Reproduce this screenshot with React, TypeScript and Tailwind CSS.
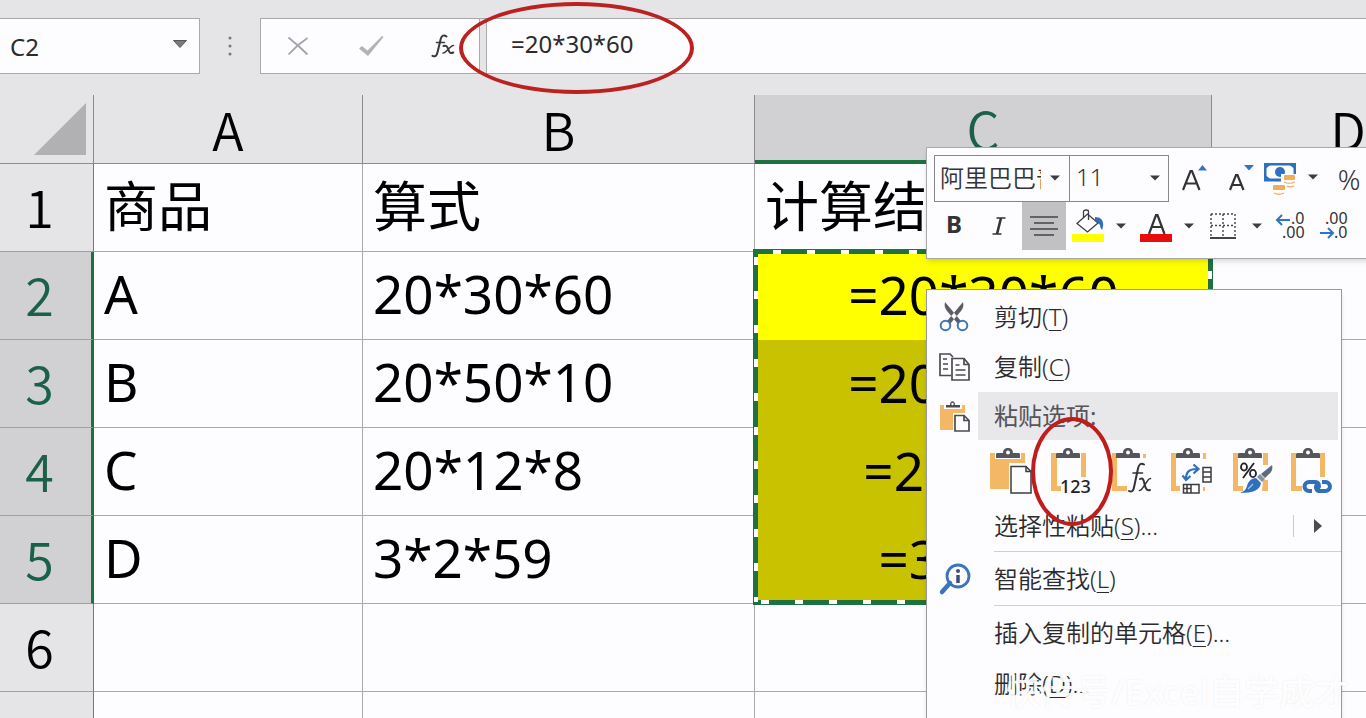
import type { ReactNode } from "react";

const UI = "font-['Noto_Sans','Noto_Sans_CJK_SC',sans-serif]";

type Row = { n: number; a?: string; b?: string; c?: string; selected?: boolean };

const rows: Row[] = [
  { n: 1, a: "商品", b: "算式", c: "计算结果" },
  { n: 2, a: "A", b: "20*30*60", c: "=20*30*60", selected: true },
  { n: 3, a: "B", b: "20*50*10", c: "=20*50*10", selected: true },
  { n: 4, a: "C", b: "20*12*8", c: "=20*12*8", selected: true },
  { n: 5, a: "D", b: "3*2*59", c: "=3*2*59", selected: true },
  { n: 6 },
];

function Caret({ className = "" }: { className?: string }) {
  return (
    <svg viewBox="0 0 12 7" className={`h-[6px] w-[10px] ${className}`} aria-hidden="true">
      <path d="M0 0.5h12L6 6.5z" fill="#3c3c40" />
    </svg>
  );
}

/* ---------- formula bar ---------- */

function FormulaBar() {
  return (
    <header className="flex h-[95px] items-start pt-[18px]">
      <div className="flex h-14 w-[200px] shrink-0 items-center border border-l-0 border-[#a9a8ab] bg-[#fdfcfe]">
        <input
          aria-label="名称框"
          defaultValue="C2"
          className="h-full w-[160px] bg-transparent pl-[10px] text-2xl text-[#2b2b2d] outline-none"
        />
        <button aria-label="展开名称" className="flex h-full flex-1 items-center justify-center pb-1">
          <svg viewBox="0 0 14 8" className="h-2 w-[14px]">
            <path d="M0.5 0.5h13L7 7.5z" fill="#77777f" stroke="#55555c" />
          </svg>
        </button>
      </div>
      <div className="flex h-14 w-[60px] shrink-0 items-center justify-center">
        <svg viewBox="0 0 4 22" className="h-[22px] w-1" fill="#77767b">
          <circle cx="2" cy="3" r="1.5" />
          <circle cx="2" cy="11" r="1.5" />
          <circle cx="2" cy="19" r="1.5" />
        </svg>
      </div>
      <div className="flex h-14 min-w-0 flex-1 items-stretch border border-r-0 border-[#a9a8ab] bg-[#fdfcfe]">
        <button aria-label="取消" className="flex w-[74px] items-center justify-center">
          <svg viewBox="0 0 22 20" className="h-5 w-[22px]" fill="none" stroke="#a3a3ab" strokeWidth="1.8">
            <path d="M1.5 1.5C7 6 14 12 20.500 18.500M20.500 2C13 7 7 12.500 1.500 18.500" />
          </svg>
        </button>
        <button aria-label="输入" className="flex w-[72px] items-center justify-center">
          <svg viewBox="0 0 26 22" className="h-[22px] w-[26px]" fill="#b3b2b8">
            <path d="M1 13.500L4 11l5.500 4.500L24 1l1.500 1L10 21z" />
          </svg>
        </button>
        <button aria-label="插入函数" className="flex w-[72px] items-center justify-center">
          <svg viewBox="0 0 24 24" className="h-6 w-6" fill="none" stroke="#3a3a3e" strokeLinecap="round">
            <path d="M15.500 2.500C13 .5 10.500 1.500 9.700 5L6.600 18c-.8 4-2.600 5-5.100 3.800" strokeWidth="2" />
            <path d="M5.500 8.500h8" strokeWidth="1.500" />
            <path d="M12.500 12c3-1 3.800.5 4.800 3.500s2 4.500 5 3" strokeWidth="2" />
            <path d="M22.500 11.500c-3-.5-7.500 8-10.500 7.500" strokeWidth="1.500" />
          </svg>
        </button>
        <div className="w-2 border-x border-[#a9a8ab] bg-[#e5e4e6]" />
        <input
          aria-label="编辑栏"
          defaultValue="=20*30*60"
          className="min-w-0 flex-1 bg-transparent pl-6 pb-1 text-2xl text-[#2b2b2d] outline-none"
        />
      </div>
    </header>
  );
}

/* ---------- grid ---------- */

function CopyMarquee() {
  return (
    <svg
      className="pointer-events-none absolute -left-[2px] -top-[3px] z-10 h-[356px] w-[460px]"
      viewBox="0 0 460 356"
      fill="none"
      aria-hidden="true"
    >
      <rect x="2.500" y="2.500" width="455" height="351" stroke="#1d7240" strokeWidth="5" />
      <path d="M20 3H457" stroke="#fff" strokeWidth="4" strokeDasharray="8 26" />
      <path d="M3 8V353" stroke="#fff" strokeWidth="4" strokeDasharray="8 26" />
      <path d="M8 353H457" stroke="#fff" strokeWidth="4" strokeDasharray="8 26" />
      <path d="M457 22V353" stroke="#fff" strokeWidth="4" strokeDasharray="8 26" />
    </svg>
  );
}

function Sheet() {
  const label = "p-0 font-['Noto_Sans_CJK_SC',sans-serif] text-[52px] leading-none font-[350]";
  const head = `${label} border-r border-b border-[#8c8b8e]`;
  const line = "border-r border-b border-[#a9a8ab] p-0 leading-none";
  return (
    <table className="w-[1485px] table-fixed border-separate border-spacing-0">
      <colgroup>
        <col className="w-[94px]" />
        <col className="w-[269px]" />
        <col className="w-[392px]" />
        <col className="w-[457px]" />
        <col />
      </colgroup>
      <thead>
        <tr className="h-[69px] bg-[#e5e4e6] text-black">
          <th className="border-r border-b border-[#8c8b8e] p-0 pr-[7px] align-middle">
            <svg viewBox="0 0 52 52" className="ml-auto h-[52px] w-[52px]" aria-label="全选">
              <path d="M52 0V52H0z" fill="#b1b0b2" />
            </svg>
          </th>
          <th className={head}>A</th>
          <th className={head}>B</th>
          <th className={`${label} border-r border-b-4 border-r-[#8c8b8e] border-b-[#1d7240] bg-[#d1d0d2] text-[#1b6048]`}>
            C
          </th>
          <th className={head}>D</th>
        </tr>
      </thead>
      <tbody>
        {rows.map((r) => {
          const cell = `${line} pl-[10px] pb-1 ${r.n === 1 ? "text-[54px]" : "text-[53px]"}`;
          return (
            <tr key={r.n} className="h-[88px]">
              <th
                className={
                  r.selected
                    ? `${label} border-r-[3px] border-b border-r-[#1d7240] border-b-[#a09fa2] bg-[#d1d0d2] pr-3 pb-1 text-[#1b6048]`
                    : `${label} border-r border-b border-r-[#77767a] border-b-[#a09fa2] bg-[#e5e4e6] pr-[14px] pb-1 text-black`
                }
              >
                {r.n}
              </th>
              <td className={cell}>{r.a}</td>
              <td className={cell}>{r.b}</td>
              <td
                className={
                  r.selected
                    ? `relative p-0 pb-1 text-center text-[53px] leading-none ${r.n === 2 ? "bg-[#ffff00]" : "bg-[#c8c200]"}`
                    : cell
                }
              >
                {r.c}
                {r.n === 2 && <CopyMarquee />}
              </td>
              <td className={line} />
            </tr>
          );
        })}
        <tr className="h-[88px]">
          <th className="border-r border-[#77767a] bg-[#e5e4e6]" />
          <td className="border-r border-[#a9a8ab]" />
          <td className="border-r border-[#a9a8ab]" />
          <td className="border-r border-[#a9a8ab]" />
          <td />
        </tr>
      </tbody>
    </table>
  );
}

/* ---------- mini toolbar ---------- */

function DropButton({ label, className }: { label: string; className: string }) {
  return (
    <button aria-label={label} className={`flex h-full items-center justify-center ${className}`}>
      <Caret />
    </button>
  );
}

function MiniToolbar() {
  return (
    <div className="absolute left-[926px] top-[147px] z-20 w-[460px] border border-[#a9a8ab] bg-[#fdfcfe] pt-[7px] pb-2 text-[#333336] shadow-md">
      <div className="flex h-[47px] items-stretch pl-[7px]">
        <div className="relative w-[136px] border border-[#88878b]">
          <select
            aria-label="字体"
            className="h-full w-full appearance-none truncate bg-transparent pl-[5px] pr-7 pb-1 font-['Noto_Sans_CJK_SC',sans-serif] text-2xl font-[350] [text-overflow:clip]"
          >
            <option>阿里巴巴普惠体</option>
          </select>
          <Caret className="pointer-events-none absolute right-[9px] top-[19px]" />
        </div>
        <div className="relative w-[99px] border border-l-0 border-[#88878b]">
          <select
            aria-label="字号"
            className="h-full w-full appearance-none bg-transparent pl-[6px] pb-1 text-2xl font-light"
          >
            <option>11</option>
          </select>
          <Caret className="pointer-events-none absolute right-[8px] top-[19px]" />
        </div>
        <button aria-label="增大字号" className="flex w-[52px] items-center justify-center">
          <svg viewBox="0 0 26 34" className="h-[34px] w-[26px]">
            <path d="M1 28L8.500 9h1.500L17.500 28M4 21.500h10.500" fill="none" stroke="#333336" strokeWidth="2.200" />
            <path d="M16 8.500L20.500 3L25 8.500z" fill="#2e75c9" />
          </svg>
        </button>
        <button aria-label="减小字号" className="flex w-[42px] items-center justify-center">
          <svg viewBox="0 0 26 34" className="h-[34px] w-[26px]">
            <path d="M1 28L7 13h1.500L14.500 28M3.500 23h8.500" fill="none" stroke="#333336" strokeWidth="2.200" />
            <path d="M15 3h10L20 8.500z" fill="#2e75c9" />
          </svg>
        </button>
        <button aria-label="会计数字格式" className="flex w-[34px] items-center justify-center">
          <svg viewBox="0 0 32 32" className="h-8 w-8">
            <rect x="1" y="1" width="30" height="16" fill="#fdfcfe" stroke="#2e6fbe" strokeWidth="3" />
            <path d="M0 0h9L0 7zM32 0h-9L32 7zM0 18h9L0 11z" fill="#2e6fbe" />
            <circle cx="16" cy="9" r="5" fill="#2e6fbe" />
            <rect x="17" y="11" width="15" height="9" fill="#fdfcfe" />
            <rect x="20" y="12" width="11" height="5" rx="1" fill="#eeae5a" />
            <path d="M20 19c3 1.500 8 1.500 11 0M23 23c3 1.500 5 1 7 0" fill="none" stroke="#eeae5a" strokeWidth="1.300" />
            <rect x="9" y="22" width="12" height="5" rx="1" fill="#eeae5a" />
            <path d="M10 30c3 1.500 7 1.500 10 0" fill="none" stroke="#eeae5a" strokeWidth="1.300" />
          </svg>
        </button>
        <DropButton label="更多数字格式" className="w-8 pb-1" />
        <button aria-label="百分比样式" className="w-10 text-[28px] leading-none font-[350]">%</button>
      </div>
      <div className="flex h-12 items-center pl-[5px]">
        <button aria-label="加粗" className="h-full w-11 pb-1 text-2xl font-bold">B</button>
        <button aria-label="倾斜" className="flex h-full w-[46px] items-center justify-center">
          <svg viewBox="0 0 14 18" className="h-[18px] w-[14px]" fill="none" stroke="#333336">
            <path d="M4.500 1h9M.5 17h9" strokeWidth="1.600" />
            <path d="M9 1L5 17" strokeWidth="2.600" />
          </svg>
        </button>
        <button aria-label="居中" className="flex h-full w-11 items-center justify-center bg-[#c1c0c3]">
          <svg viewBox="0 0 28 20" className="h-5 w-7" stroke="#444448" strokeWidth="1.500">
            <path d="M0 1h28M4 7h20M0 13h28M4 19h20" />
          </svg>
        </button>
        <button aria-label="填充颜色" className="flex h-full w-11 items-center justify-center">
          <svg viewBox="0 0 32 34" className="h-[34px] w-8" fill="none">
            <path d="M5 14.500L15.500 5L26 14l-10.500 9z" fill="#fff" stroke="#3c3c40" strokeWidth="1.300" />
            <path d="M11.500 9V2.500c0-2 5-2 5 0V11" stroke="#3c3c40" strokeWidth="1.300" />
            <path d="M23 8c7 0 10 5 7 13-1-1-2-3-2-5l-5-5z" fill="#2e6fbe" />
            <rect x="0" y="25" width="32" height="8" fill="#ffff00" />
          </svg>
        </button>
        <DropButton label="更多填充颜色" className="w-[22px]" />
        <button aria-label="字体颜色" className="flex h-full w-12 items-center justify-center">
          <svg viewBox="0 0 32 34" className="h-[34px] w-8">
            <path d="M9 25L16 6h1.500L24.500 25M12 18h10" fill="none" stroke="#333336" strokeWidth="2.200" />
            <rect x="0" y="25" width="32" height="8" fill="#e80c0c" />
          </svg>
        </button>
        <DropButton label="更多字体颜色" className="w-[18px]" />
        <button aria-label="边框" className="flex h-full w-[50px] items-center justify-center">
          <svg viewBox="0 0 26 26" className="h-[26px] w-[26px]" fill="none" stroke="#444448">
            <path d="M1 1h24M1 12.500h24M1 1v23M13 1v23M25 1v23" strokeWidth="1.400" strokeDasharray="2 2" />
            <path d="M0 25h26" strokeWidth="2" />
          </svg>
        </button>
        <DropButton label="更多边框" className="w-[18px]" />
        <button aria-label="增加小数位数" className="flex h-full w-[50px] items-center justify-center">
          <svg viewBox="0 0 30 30" className="h-[30px] w-[30px] overflow-visible">
            <path d="M1 9h13M6 4L1 9l5 5" fill="none" stroke="#2e75c9" strokeWidth="2" />
            <text x="15" y="13" fontSize="16" fill="#333336">.0</text>
            <text x="6" y="27" fontSize="16" fill="#333336">.00</text>
          </svg>
        </button>
        <button aria-label="减少小数位数" className="flex h-full w-9 items-center justify-center">
          <svg viewBox="0 0 30 30" className="h-[30px] w-[30px] overflow-visible">
            <path d="M1 22h13M9 17l5 5-5 5" fill="none" stroke="#2e75c9" strokeWidth="2" />
            <text x="6" y="13" fontSize="16" fill="#333336">.00</text>
            <text x="15" y="27" fontSize="16" fill="#333336">.0</text>
          </svg>
        </button>
      </div>
    </div>
  );
}

/* ---------- context menu icons ---------- */

function Clip({ x = 7 }: { x?: number }) {
  return (
    <g transform={`translate(${x} 0)`}>
      <path d="M0 10V6.500c0-1 .6-1.500 1.500-1.500H7C7 1.500 9 0 12 0s5 1.500 5 5h5.500c.9 0 1.500.5 1.500 1.500V10z" fill="#55565b" />
      <circle cx="12" cy="4.500" r="2" fill="#fdfcfe" />
    </g>
  );
}

const ORANGE = "#f3b765";

function OptionSvg({ children }: { children: ReactNode }) {
  return (
    <svg viewBox="0 0 44 46" className="h-[46px] w-11 overflow-visible" fill="none">
      {children}
    </svg>
  );
}

function PasteAllIcon() {
  return (
    <OptionSvg>
      <path d="M1 5h35v10H20v26H1z" fill={ORANGE} />
      <path d="M6 5h26v6H6z" fill="#fdfcfe" />
      <Clip />
      <path d="M22 18.500h15l5 5V45H22z" fill="#fdfcfe" stroke="#3c3c40" strokeWidth="1.500" />
      <path d="M37 18.500v5h5" stroke="#3c3c40" strokeWidth="1.500" />
    </OptionSvg>
  );
}

function PasteValuesIcon() {
  return (
    <OptionSvg>
      <path d="M2 5h6v33h4v5H2zM32 5h5v24h-5z" fill={ORANGE} />
      <Clip />
      <text x="11" y="45" fontSize="18" fontWeight="500" fill="#222226">123</text>
    </OptionSvg>
  );
}

function PasteFormulaIcon() {
  return (
    <OptionSvg>
      <path d="M3 5h5v33h10v5H3zM34 6h3v4h-3z" fill={ORANGE} />
      <Clip />
      <g stroke="#333336" strokeLinecap="round">
        <path d="M35 16.500c-3-1.800-5.200-.2-6 4l-3.800 18c-.8 4.500-2.500 6-5.200 4.500" strokeWidth="2" />
        <path d="M24 25h9.500" strokeWidth="1.600" />
        <path d="M31 31c2.500-1.500 3.500 0 4.300 4s2 8.500 5.700 7" strokeWidth="2" />
        <path d="M41.500 30.500c-3-1-7.500 12.500-11 12" strokeWidth="1.600" />
      </g>
    </OptionSvg>
  );
}

function TransposeIcon() {
  return (
    <OptionSvg>
      <path d="M2 5h5v33h4v5H2zM34 5h3v6h-3zM34 39h2v4h-2z" fill={ORANGE} />
      <Clip />
      <path d="M17 31c0-7 3-10 11-10M13.500 27.500L17 32l4.500-4M24.500 16.500L29.500 21l-5 4.500" stroke="#2e6fbe" strokeWidth="2.200" />
      <path d="M34 19.500h8V34h-8zM34 24h8M34 29h8M14.500 36.500H30V45H14.500zM18 36.500V45M22 36.500V45M14.500 40.500H22" stroke="#3c3c40" strokeWidth="1.500" />
    </OptionSvg>
  );
}

function PasteFormatIcon() {
  return (
    <OptionSvg>
      <path d="M4 5h5v33h5v5H4zM34 5h5v12h-5zM34 32h5v11h-6z" fill={ORANGE} />
      <Clip x={9} />
      <g stroke="#222226" strokeWidth="1.800">
        <ellipse cx="15" cy="19" rx="3" ry="3.600" />
        <ellipse cx="24" cy="25.500" rx="3" ry="3.600" />
        <path d="M25 15L14 30" />
      </g>
      <path d="M43 17c1 3 0 7-3 9l-4 4-4-4z" fill="#5d6b80" />
      <path d="M31 26l5 5-3 3-5-5z" fill="#8a93a1" />
      <path d="M27 30l5 5c-1 7-8 10-21 10 5-2 6-4 7-7 1-4 4-8 9-8z" fill="#2e6fbe" />
      <path d="M19 41l5-5" stroke="#9cc2ee" strokeWidth="1.500" />
    </OptionSvg>
  );
}

function PasteLinkIcon() {
  return (
    <OptionSvg>
      <path d="M2 5h5v33h6v5H2zM31 5h5v24h-5z" fill={ORANGE} />
      <Clip />
      <g stroke="#2e6fbe" strokeWidth="4">
        <path d="M23 43h-3a4.500 4.500 0 0 1 0-9h6c4 0 5 4 3 6.500" />
        <path d="M33 34h3.500a4.500 4.500 0 0 1 0 9H31c-4 0-5-4-3-6.500" />
      </g>
    </OptionSvg>
  );
}

function CutIcon() {
  return (
    <svg viewBox="0 0 30 30" className="h-[30px] w-[30px]" fill="none">
      <path d="M6 0c-1 4 0 6 2 9l11 13 2.500-3.500zM24 0c1 4 0 6-2 9L11 22l-2.500-3.500z" fill="#5d5d63" />
      <circle cx="6.500" cy="23.500" r="4.800" fill="#fdfcfe" stroke="#3f78b5" strokeWidth="2" />
      <circle cx="23.500" cy="23.500" r="4.800" fill="#fdfcfe" stroke="#3f78b5" strokeWidth="2" />
    </svg>
  );
}

function CopyIcon() {
  return (
    <svg viewBox="0 0 32 28" className="h-7 w-8" fill="none" stroke="#4a4a50" strokeWidth="1.700">
      <path d="M12 22.500H1V1h10l3 3M4 6h4M4 11h5M4 16h5" />
      <path d="M13 5.500h12l5 6V27H13z" fill="#fdfcfe" />
      <path d="M25 5.500v6h5M16.500 12h4M16.500 17h10M16.500 22h10" />
    </svg>
  );
}

function PasteIcon() {
  return (
    <svg viewBox="0 0 32 32" className="h-8 w-8" fill="none">
      <path d="M1 5h4v4h18V5h3v8H14v17H1z" fill={ORANGE} />
      <path d="M7 7.500V5h4c0-5 5-5 5 0h5v2.500z" fill="#4a4a50" />
      <circle cx="13.500" cy="4" r="1.200" fill="#fff" />
      <path d="M16 15.500h9l5 5V31H16z" fill="#fdfcfe" stroke="#4a4a50" strokeWidth="1.700" />
      <path d="M25 15.500v5h5" stroke="#4a4a50" strokeWidth="1.700" />
    </svg>
  );
}

function LookupIcon() {
  return (
    <svg viewBox="0 0 32 32" className="h-8 w-8 overflow-visible" fill="none">
      <path d="M11 20L3 29" stroke="#3b74b9" strokeWidth="4.500" strokeLinecap="round" />
      <circle cx="19" cy="13" r="11" stroke="#3b74b9" strokeWidth="2.800" />
      <circle cx="19" cy="8" r="2" fill="#3c4d7c" />
      <path d="M19 12v8" stroke="#3c4d7c" strokeWidth="3.500" />
    </svg>
  );
}

/* ---------- context menu ---------- */

function MenuItem({
  icon,
  label,
  hotkey,
  more,
  className = "h-[50px]",
  children,
}: {
  icon?: ReactNode;
  label: string;
  hotkey: string;
  more?: boolean;
  className?: string;
  children?: ReactNode;
}) {
  return (
    <button role="menuitem" className={`flex w-full items-center text-left ${className}`}>
      <span className="flex w-[67px] items-center pl-3">{icon}</span>
      <span className="flex-1 whitespace-nowrap">
        {label}(<span className="underline decoration-1 underline-offset-4">{hotkey}</span>){more && "..."}
      </span>
      {children}
    </button>
  );
}

const pasteOptions = [
  { label: "粘贴", icon: <PasteAllIcon /> },
  { label: "值", icon: <PasteValuesIcon /> },
  { label: "公式", icon: <PasteFormulaIcon /> },
  { label: "转置", icon: <TransposeIcon /> },
  { label: "格式", icon: <PasteFormatIcon /> },
  { label: "粘贴链接", icon: <PasteLinkIcon /> },
];

function ContextMenu() {
  return (
    <div
      role="menu"
      className="absolute left-[926px] top-[289px] z-20 w-[416px] border border-[#9a999d] bg-[#fdfcfe] pt-[2px] pb-6 text-2xl leading-none font-[350] text-[#2b2b2e] shadow-md"
    >
      <MenuItem icon={<CutIcon />} label="剪切" hotkey="T" />
      <MenuItem icon={<CopyIcon />} label="复制" hotkey="C" />
      <div className="flex h-12 items-center pr-[3px]">
        <span className="flex w-[51px] items-center pl-3">
          <PasteIcon />
        </span>
        <span className="flex h-full flex-1 items-center bg-[#e8e7e9] pl-4 font-normal text-[#55555a]">粘贴选项:</span>
      </div>
      <div className="relative flex h-[61px] items-center pl-[54px]">
        {pasteOptions.map((o) => (
          <button key={o.label} aria-label={o.label} className="flex h-full w-[60px] items-center justify-center">
            {o.icon}
          </button>
        ))}
        <div className="pointer-events-none absolute left-[104px] -top-[23px] h-[109px] w-[82px] rounded-[50%] border-4 border-[#c01c1c]" />
      </div>
      <MenuItem label="选择性粘贴" hotkey="S" more>
        <span className="flex h-[22px] w-[48px] items-center justify-center border-l border-[#c9c8cb]">
          <svg viewBox="0 0 8 14" className="h-[14px] w-2">
            <path d="M0 0L8 7L0 14z" fill="#4a4a50" />
          </svg>
        </span>
      </MenuItem>
      <hr className="ml-[67px] border-[#cfced1]" />
      <MenuItem icon={<LookupIcon />} label="智能查找" hotkey="L" className="h-[53px]" />
      <hr className="ml-[67px] border-[#cfced1]" />
      <MenuItem label="插入复制的单元格" hotkey="E" more className="h-[54px]" />
      <MenuItem label="删除" hotkey="D" more className="h-12" />
    </div>
  );
}

export default function App() {
  return (
    <main className={`relative h-screen overflow-hidden bg-[#fdfcfe] text-black ${UI}`}>
      <div className="bg-[#e5e4e6]">
        <FormulaBar />
      </div>
      <Sheet />
      <div className="pointer-events-none absolute left-[459px] top-[2px] z-10 h-[92px] w-[235px] rounded-[50%] border-4 border-[#bb211f]" />
      <MiniToolbar />
      <ContextMenu />
      <p className="pointer-events-none absolute left-[1006px] top-[670px] z-30 whitespace-nowrap text-[35px] leading-[44px] font-medium text-white/90 [text-shadow:0_0_2px_rgba(0,0,0,0.08)]">
        快传号/Excel自学成才
      </p>
    </main>
  );
}
